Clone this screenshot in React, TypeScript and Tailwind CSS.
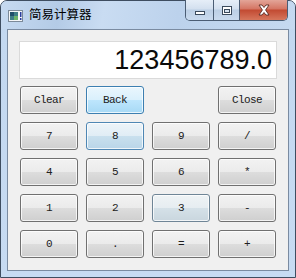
import React from "react";

type Tone = "normal" | "hot" | "warm" | "faint";

const toneClass: Record<Tone, string> = {
  normal:
    "border-[#707070] bg-[linear-gradient(to_bottom,#f2f2f2_0%,#ebebeb_50%,#dddddd_50%,#cfcfcf_100%)]",
  hot:
    "border-[#3c7fb1] bg-[linear-gradient(to_bottom,#eaf6fd_0%,#d9f0fc_50%,#bee6fd_50%,#a7d9f5_100%)]",
  warm:
    "border-[#4f87b4] bg-[linear-gradient(to_bottom,#edf4f9_0%,#e0edf5_50%,#c9e0ee_50%,#b9d5e8_100%)]",
  faint:
    "border-[#6f8596] bg-[linear-gradient(to_bottom,#eff3f5_0%,#e6edf1_50%,#d5e1e8_50%,#c9d6de_100%)]",
};

function Btn({ label, tone = "normal" }: { label: string; tone?: Tone }) {
  return (
    <div
      className={`h-[28px] w-[58px] rounded-[3px] border flex items-center justify-center shadow-[inset_0_0_0_1px_rgba(255,255,255,0.75)] ${toneClass[tone]}`}
    >
      <span className="font-['Liberation_Mono',monospace] text-[11px] tracking-[-0.6px] text-[#202020] leading-none">
        {label}
      </span>
    </div>
  );
}

export default function App() {
  const rows: { label: string; tone?: Tone }[][] = [
    [{ label: "7" }, { label: "8", tone: "warm" }, { label: "9" }, { label: "/" }],
    [{ label: "4" }, { label: "5" }, { label: "6" }, { label: "*" }],
    [{ label: "1" }, { label: "2" }, { label: "3", tone: "faint" }, { label: "-" }],
    [{ label: "0" }, { label: "." }, { label: "=" }, { label: "+" }],
  ];
  return (
    <div className="w-[296px] h-[278px] overflow-hidden bg-white">
      <div className="w-[296px] h-[278px] rounded-t-[7px] border border-[#3e4d60] bg-[linear-gradient(to_bottom,#bdd3ec_0%,#c3d8f0_12%,#c7dbf2_100%)] flex flex-col relative">
        {/* Title bar */}
        <div className="h-[28px] flex items-start relative bg-[linear-gradient(100deg,#c6daf1_0%,#b4cbe6_20%,#c9dcf2_35%,#bcd2ec_60%,#c5d9f0_100%)] rounded-t-[6px]">
          <div className="mt-[8px] ml-[7px]">
            <svg width="16" height="14" viewBox="0 0 16 14">
              <rect x="0.5" y="1.5" width="14" height="11" fill="#f4f6f8" stroke="#7c8a99" />
              <rect x="2" y="3" width="8" height="8" fill="#3f7e86" />
              <rect x="2" y="3" width="4" height="4" fill="#1f4e6a" />
              <rect x="6" y="7" width="4" height="4" fill="#6db36b" />
              <rect x="12" y="3" width="1.5" height="5" fill="#2a3f9e" />
              <rect x="12" y="9" width="1.5" height="2" fill="#2a3f9e" />
            </svg>
          </div>
          <span className="ml-[5px] mt-[5px] text-[12.5px] leading-[16px] text-black font-['Noto_Sans_CJK_SC','Noto_Sans',sans-serif]">
            简易计算器
          </span>
          {/* caption buttons */}
          <div className="absolute right-[7px] top-[-1px] h-[21px] flex rounded-b-[5px] border border-t-0 border-[#4b5d74] overflow-hidden">
            <div className="w-[28px] h-full border-r border-[#4b5d74] bg-[linear-gradient(to_bottom,#e6eef8_0%,#d3e0ef_45%,#bccfe5_50%,#c9daee_100%)] flex items-center justify-center">
              <div className="w-[10px] h-[4px] mt-[6px] bg-white border border-[#3b4a5c]" />
            </div>
            <div className="w-[26px] h-full border-r border-[#4b5d74] bg-[linear-gradient(to_bottom,#e6eef8_0%,#d3e0ef_45%,#bccfe5_50%,#c9daee_100%)] flex items-center justify-center">
              <div className="w-[10px] h-[9px] border border-[#3b4a5c] bg-white flex items-center justify-center">
                <div className="w-[6px] h-[4px] mt-[1px] border border-[#3b4a5c] bg-[#d6e2f0]" />
              </div>
            </div>
            <div className="w-[47px] h-full bg-[linear-gradient(to_bottom,#e3a598_0%,#d47563_45%,#c24a32_50%,#d6765c_100%)] flex items-center justify-center">
              <svg width="14" height="12" viewBox="0 0 14 12">
                <path
                  d="M2 1 L5 1 L7 3.5 L9 1 L12 1 L8.6 6 L12 11 L9 11 L7 8.5 L5 11 L2 11 L5.4 6 Z"
                  fill="#ffffff"
                  stroke="#5a2a22"
                  strokeWidth="0.9"
                  strokeLinejoin="round"
                />
              </svg>
            </div>
          </div>
        </div>
        {/* Client area */}
        <div className="mx-[6px] h-[242px] border border-[#7a8ba1] bg-[#f0f0f0] pl-[12px] pr-[9px] pt-[11px]">
          <div className="-ml-px h-[38px] w-[258px] bg-white border border-[#dadada] flex items-center justify-end pr-[4px]">
            <span className="font-['Liberation_Sans',Arial,sans-serif] text-[27px] leading-none text-[#0a0a0a]">
              123456789.0
            </span>
          </div>
          <div className="mt-[7px] grid grid-cols-[repeat(4,58px)] gap-x-[8px] gap-y-[8px]">
            <Btn label="Clear" />
            <Btn label="Back" tone="hot" />
            <div />
            <Btn label="Close" />
            {rows.flat().map((b, i) => (
              <Btn key={i} label={b.label} tone={b.tone} />
            ))}
          </div>
        </div>
      </div>
    </div>
  );
}
